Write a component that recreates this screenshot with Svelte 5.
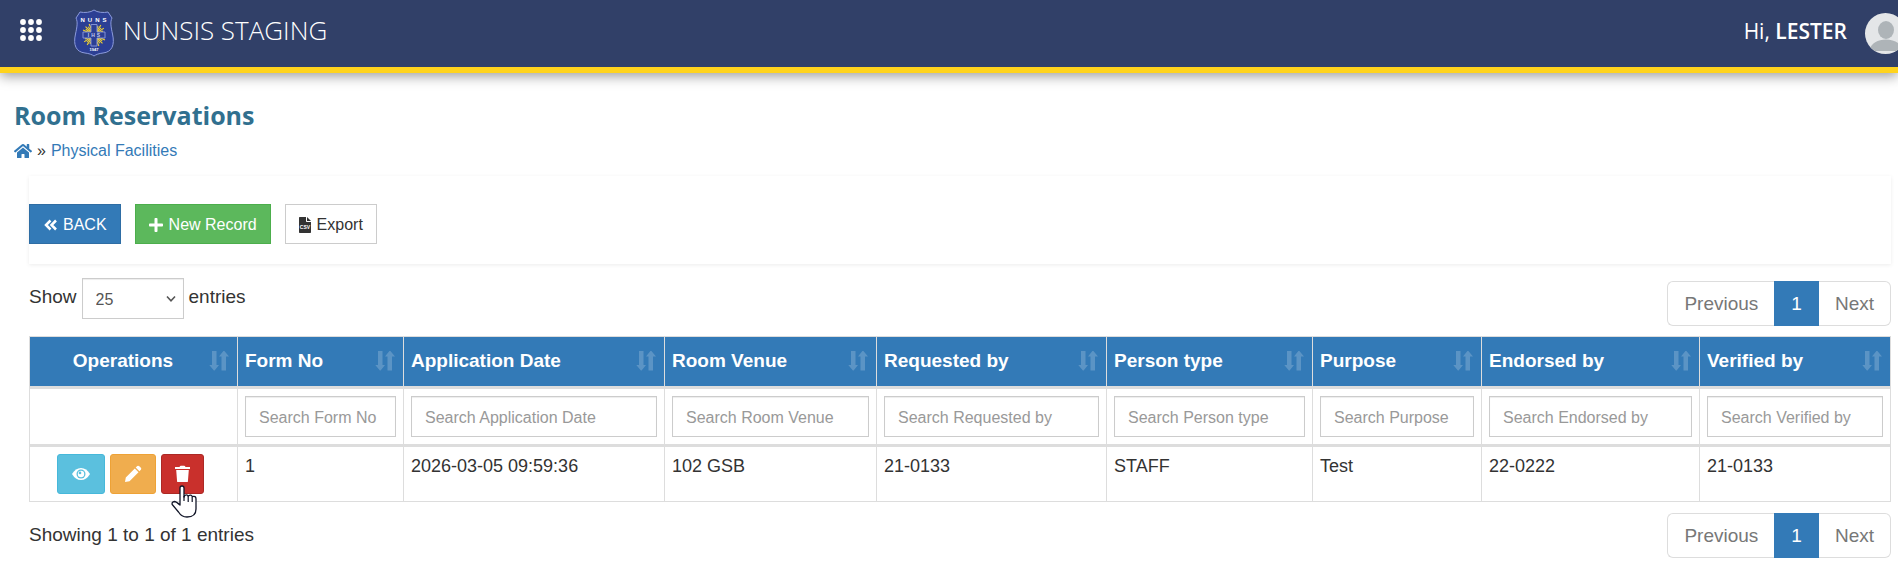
<script lang="ts">
	// widths are relative, the table always fills its container
	const columns = [
		{ title: 'Operations', width: 208, search: false },
		{ title: 'Form No', width: 166, search: true },
		{ title: 'Application Date', width: 261, search: true },
		{ title: 'Room Venue', width: 212, search: true },
		{ title: 'Requested by', width: 230, search: true },
		{ title: 'Person type', width: 206, search: true },
		{ title: 'Purpose', width: 169, search: true },
		{ title: 'Endorsed by', width: 218, search: true },
		{ title: 'Verified by', width: 191, search: true }
	]

	const total = columns.reduce((sum, c) => sum + c.width, 0)

	const rows = [
		['1', '2026-03-05 09:59:36', '102 GSB', '21-0133', 'STAFF', 'Test', '22-0222', '21-0133']
	]

	const dots = [3, 11, 19]
	const rays = [24, 35, 45, 55, 66, 114, 125, 135, 145, 156, 204, 215, 225, 235, 246, 294, 305, 315, 325, 336]

	let pageSize = $state('25')
</script>

{#snippet pagination(label: string)}
	<nav class="pagination" aria-label={label}>
		<button type="button">Previous</button>
		<button type="button" class="current" aria-current="page">1</button>
		<button type="button">Next</button>
	</nav>
{/snippet}

<header class="topbar">
	<button type="button" class="apps" aria-label="Menu">
		<svg width="22" height="22" viewBox="0 0 22 22" fill="#fff">
			{#each dots as cy}
				{#each dots as cx}
					<circle {cx} {cy} r="2.9" />
				{/each}
			{/each}
		</svg>
	</button>
	<a class="brand" href="/">
		<svg width="42" height="48" viewBox="0 0 42 48" aria-hidden="true">
			<path d="M21 1C18 3.500 11 4 7 3L3 9C5 13 4 18 2.500 25C0 36 3 43 12 44C16 44.500 19 45.500 21 47C23 45.500 26 44.500 30 44C39 43 42 36 39.500 25C38 18 37 13 39 9L35 3C31 4 24 3.500 21 1Z" fill="#2c3f94" stroke="#8c9bdc" stroke-width="1" />
			<g stroke="#f2d22e" stroke-width="1.100">
				{#each rays as angle, i}
					<path d={i % 2 ? 'M21 22V14' : 'M21 22V16'} transform={`rotate(${angle} 21 26)`} />
				{/each}
			</g>
			<path d="M18 15.500H24V23H32V29H24V37H18V29H10V23H18Z" fill="#2c3f94" stroke="#8c9bdc" stroke-width="0.900" />
			<g fill="#fff" font-family="'Liberation Sans', Arial, sans-serif" font-weight="700" text-anchor="middle">
				<text x="22" y="13" font-size="6" letter-spacing="3">NUNS</text>
				<text x="22" y="28" font-size="5" letter-spacing="2" fill="#c3cbee">IHS</text>
				<text x="21" y="42" font-size="4">1947</text>
			</g>
		</svg>
		<span>NUNSIS STAGING</span>
	</a>
	<div class="user">
		<span>Hi, <b>LESTER</b></span>
		<svg width="41" height="41" viewBox="0 0 41 41" role="img" aria-label="Profile">
			<defs>
				<clipPath id="face"><circle cx="20.500" cy="20.500" r="20.500" /></clipPath>
			</defs>
			<g clip-path="url(#face)">
				<rect width="41" height="41" fill="#e4e6e8" />
				<ellipse cx="21" cy="17" rx="8" ry="9" fill="#aeb4b8" />
				<path d="M4 38C6 30 13 26.500 21 26.500C29 26.500 36 30 38 38Z" fill="#aeb4b8" />
			</g>
		</svg>
	</div>
</header>

<main>
	<h1>Room Reservations</h1>
	<nav class="crumbs" aria-label="Breadcrumb">
		<a href="/" aria-label="Home">
			<svg width="18" height="16" viewBox="0 0 576 512" fill="currentColor">
				<path d="M280.37 148.26L96 300.11V464a16 16 0 0 0 16 16l112.06-.29a16 16 0 0 0 15.92-16V368a16 16 0 0 1 16-16h64a16 16 0 0 1 16 16v95.64a16 16 0 0 0 16 16.05L464 480a16 16 0 0 0 16-16V300L295.67 148.26a12.19 12.19 0 0 0-15.3 0zM571.6 251.47L488 182.56V44.05a12 12 0 0 0-12-12h-56a12 12 0 0 0-12 12v72.61L318.47 43a48 48 0 0 0-61 0L4.34 251.47a12 12 0 0 0-1.6 16.9l25.5 31A12 12 0 0 0 45.15 301l235.22-193.74a12.19 12.19 0 0 1 15.3 0L530.9 301a12 12 0 0 0 16.9-1.6l25.5-31a12 12 0 0 0-1.7-16.93z" />
			</svg>
		</a>
		<span>»</span>
		<a href="/physical-facilities">Physical Facilities</a>
	</nav>

	<div class="content">
		<div class="panel">
			<button type="button" class="btn primary">
				<svg width="14" height="16" viewBox="0 0 14 16" fill="none" stroke="currentColor" stroke-width="2.500">
					<path d="M7.500 3.500L3 8L7.500 12.500M13 3.500L8.500 8L13 12.500" />
				</svg>
				BACK
			</button>
			<button type="button" class="btn success">
				<svg width="14" height="16" viewBox="0 0 448 512" fill="currentColor">
					<path d="M416 208H272V64c0-17.67-14.33-32-32-32h-32c-17.67 0-32 14.33-32 32v144H32c-17.67 0-32 14.33-32 32v32c0 17.67 14.33 32 32 32h144v144c0 17.67 14.33 32 32 32h32c17.67 0 32-14.33 32-32V304h144c17.67 0 32-14.33 32-32v-32c0-17.67-14.33-32-32-32z" />
				</svg>
				New Record
			</button>
			<button type="button" class="btn plain">
				<svg width="12" height="16" viewBox="0 0 12 16" fill="currentColor">
					<path d="M.7 0H7V4.300Q7 5 7.700 5H12V15.300Q12 16 11.300 16H.7Q0 16 0 15.300V.7Q0 0 .7 0ZM8 0L12 4H8Z" />
					<text x="6" y="12" font-size="5" font-weight="700" text-anchor="middle" fill="#fff" aria-hidden="true">CSV</text>
				</svg>
				Export
			</button>
		</div>

		<div class="controls">
			<div class="length">
				<label for="page-size">Show</label>
				<span class="select">
					<select id="page-size" bind:value={pageSize}>
						<option value="10">10</option>
						<option value="25">25</option>
						<option value="50">50</option>
						<option value="100">100</option>
					</select>
					<svg width="10" height="8" viewBox="0 0 10 8" fill="none" stroke="#555" stroke-width="1.600" aria-hidden="true">
						<path d="M1 1.500L5 5.800L9 1.500" />
					</svg>
				</span>
				<span>entries</span>
			</div>
			{@render pagination('Pages')}
		</div>

		<table>
			<colgroup>
				{#each columns as column}
					<col style:width={`${(column.width / total) * 100}%`} />
				{/each}
			</colgroup>
			<thead>
				<tr class="titles">
					{#each columns as column}
						<th scope="col">
							<button type="button" class="sort" class:center={!column.search}>
								<span>{column.title}</span>
								<svg width="20" height="20" viewBox="0 0 20 20" fill="#fff" fill-opacity="0.2" aria-hidden="true">
									<path d="M3 0H7.500V14H10L5.600 19.500H4.900L.3 14H3ZM12.500 19.500V5.500H10L14.400 0H15.400L20 5.500H17V19.500Z" />
								</svg>
							</button>
						</th>
					{/each}
				</tr>
				<tr class="filters">
					{#each columns as column}
						<td>
							{#if column.search}
								<input type="text" placeholder={`Search ${column.title}`} aria-label={`Search ${column.title}`} />
							{/if}
						</td>
					{/each}
				</tr>
			</thead>
			<tbody>
				{#each rows as row}
					<tr>
						<td>
							<div class="actions">
								<button type="button" class="view" aria-label="View">
									<svg width="18" height="16" viewBox="0 0 18 16">
										<path d="M0 8Q3.500 2 9 2T18 8Q14.500 14 9 14T0 8Z" fill="#fff" />
										<circle cx="9" cy="8" r="4.500" fill="#5bc0de" />
										<circle cx="9" cy="8" r="3.200" fill="#fff" />
										<circle cx="8" cy="6.900" r="1.300" fill="#5bc0de" />
									</svg>
								</button>
								<button type="button" class="edit" aria-label="Edit">
									<svg width="18" height="18" viewBox="0 0 18 18" fill="#fff">
										<path d="M1 17L1.800 12.500L10.800 3.500L14.500 7.200L5.500 16.200ZM11.700 2.600L13.300 1Q14.300 .3 15.300 1.200L16.900 2.800Q17.700 3.800 16.900 4.800L15.400 6.300Z" />
									</svg>
								</button>
								<button type="button" class="delete" aria-label="Delete">
									<svg width="15" height="18" viewBox="0 0 15 18" fill="#fff">
										<path d="M0 2H4.500Q5 .8 6 .8H9Q10 .8 10.500 2H15V4H0ZM1.200 5H13.800L12.900 16.500Q12.800 17 12.300 17H2.700Q2.200 17 2.100 16.500Z" />
									</svg>
									<svg class="pointer" width="26" height="33" viewBox="0 0 26 33" aria-hidden="true">
										<path d="M9 20V3Q9 1 11 1T13 3V12Q13.500 9.800 15.200 9.800T17.200 11Q20.500 9 21.200 11.700Q25 10.500 25 14V24Q25 32 16 32Q10.500 32 7.500 27L1.200 19.500Q.5 17 3.500 16.500Q5 16.500 9 20Z" fill="#fff" stroke="#111527" stroke-width="1.300" stroke-linejoin="round" />
										<path d="M13 11V16M17.200 11V17M21.200 12V17" stroke="#111527" stroke-width="1.200" />
									</svg>
								</button>
							</div>
						</td>
						{#each row as cell}
							<td>{cell}</td>
						{/each}
					</tr>
				{/each}
			</tbody>
		</table>

		<div class="footer">
			<div>Showing 1 to 1 of 1 entries</div>
			{@render pagination('Pages, bottom')}
		</div>
	</div>
</main>

<style>
	:global(body) {
		margin: 0;
		background: #fff;
		color: #333;
		font-family: "Liberation Sans", Arial, sans-serif;
		font-size: 19px;
		line-height: 24px;
	}

	button,
	input,
	select {
		box-sizing: border-box;
		margin: 0;
		font-family: inherit;
	}

	button {
		cursor: pointer;
	}

	svg {
		display: block;
		flex: none;
	}

	a {
		color: #337ab7;
		text-decoration: none;
	}

	/* top bar */
	.topbar {
		display: flex;
		align-items: center;
		height: 67px;
		padding-left: 20px;
		overflow: clip;
		overflow-clip-margin: 30px;
		color: #fff;
		background: #314068;
		border-bottom: 6px solid #ffd31d;
		box-shadow: 0 3px 12px rgba(0, 0, 0, 0.4);
	}

	.apps {
		padding: 0;
		margin: 0 31px 7px 0;
		border: 0;
		background: none;
	}

	.brand {
		display: flex;
		align-items: center;
		gap: 8px;
		color: #fff;
		font-family: "Open Sans", "Noto Sans", sans-serif;
		font-size: 26px;
		font-weight: 300;
	}

	.brand svg {
		margin-bottom: 2px;
	}

	.brand span {
		padding-bottom: 7px;
	}

	.user {
		display: flex;
		align-items: center;
		gap: 18px;
		margin: 0 -8px 0 auto;
		font-family: "Open Sans", "Noto Sans", sans-serif;
		font-size: 21px;
	}

	.user span {
		padding-bottom: 5px;
	}

	.user b {
		font-weight: 600;
	}

	/* page */
	main {
		padding: 24px 7px 6px 14px;
	}

	h1 {
		margin: 0;
		color: #31708f;
		font-family: "Open Sans", "Noto Sans", sans-serif;
		font-size: 25px;
		font-weight: 700;
		line-height: 36px;
	}

	.crumbs {
		display: flex;
		align-items: center;
		gap: 5px;
		margin-top: 6px;
		font-size: 16px;
	}

	.content {
		margin: 13px 0 0 15px;
	}

	.panel {
		display: flex;
		gap: 14px;
		padding: 28px 0 20px;
		box-shadow: 0 1px 4px rgba(0, 0, 0, 0.08);
	}

	.btn {
		display: flex;
		align-items: center;
		gap: 6px;
		height: 40px;
		padding: 1px 13px 0;
		border: 1px solid;
		font-size: 16px;
	}

	.primary {
		color: #fff;
		background: #337ab7;
		border-color: #2e6da4;
	}

	.success {
		color: #fff;
		background: #5cb85c;
		border-color: #4cae4c;
	}

	.plain {
		color: #333;
		background: #fff;
		border-color: #ccc;
	}

	.controls {
		display: flex;
		justify-content: space-between;
		align-items: flex-end;
		height: 48px;
		margin: 14px 0 10px;
	}

	.length {
		display: flex;
		align-items: flex-start;
		align-self: flex-start;
		gap: 5px;
	}

	.length > label,
	.length > span:last-child {
		padding-top: 7px;
	}

	.select {
		display: inline-grid;
		align-items: center;
	}

	.select > * {
		grid-area: 1 / 1;
	}

	.select svg {
		justify-self: end;
		margin-right: 8px;
		pointer-events: none;
	}

	select {
		width: 102px;
		appearance: none;
	}

	select,
	input {
		height: 41px;
		padding: 2px 13px 0;
		color: #555;
		background: #fff;
		border: 1px solid #ccc;
		border-radius: 0;
		box-shadow: inset 0 1px 1px rgba(0, 0, 0, 0.075);
		font-size: 16px;
	}

	input {
		display: block;
		width: 100%;
	}

	input::placeholder {
		color: #999;
		opacity: 1;
	}

	.pagination {
		display: flex;
	}

	.pagination button {
		height: 45px;
		padding: 0 16px;
		color: #777;
		background: #fff;
		border: 1px solid #ddd;
		font-size: 19px;
	}

	.pagination button:first-child {
		border-right: 0;
		border-radius: 6px 0 0 6px;
	}

	.pagination button:last-child {
		border-left: 0;
		border-radius: 0 6px 6px 0;
	}

	.pagination .current {
		color: #fff;
		background: #337ab7;
		border-color: #337ab7;
	}

	/* records */
	table {
		width: 100%;
		table-layout: fixed;
		border-collapse: separate;
		border-spacing: 0;
		border: 1px solid #ddd;
		border-width: 1px 0 0 1px;
		font-size: 18px;
	}

	th,
	td {
		padding: 7px;
		border: 0 solid #ddd;
		border-width: 0 1px 1px 0;
		text-align: left;
		vertical-align: top;
	}

	thead th,
	thead td {
		border-bottom-width: 3px;
	}

	.titles th {
		padding: 0;
		background: #337ab7;
	}

	.sort {
		display: flex;
		align-items: center;
		justify-content: space-between;
		width: 100%;
		height: 49px;
		padding: 0 8px 2px 7px;
		color: #fff;
		background: none;
		border: 0;
		font-size: 19px;
		font-weight: 700;
	}

	.center span {
		flex: 1;
		text-align: center;
	}

	.actions {
		display: flex;
		justify-content: center;
		padding-right: 2px;
	}

	.actions button {
		display: flex;
		align-items: center;
		justify-content: center;
		height: 40px;
		margin-right: 5px;
		padding: 0 14px;
		border: 1px solid;
		border-radius: 3px;
	}

	.actions .view {
		background: #5bc0de;
		border-color: #46b8da;
	}

	.actions .edit {
		padding: 0 13px;
		background: #f0ad4e;
		border-color: #eea236;
	}

	.actions .delete {
		position: relative;
		padding: 0 13px;
		background: #c9302c;
		border-color: #ac2925;
	}

	.pointer {
		position: absolute;
		top: 30px;
		left: 9px;
	}

	.footer {
		display: flex;
		align-items: center;
		justify-content: space-between;
		margin-top: 11px;
	}

	.footer > div {
		padding-bottom: 2px;
	}
</style>
